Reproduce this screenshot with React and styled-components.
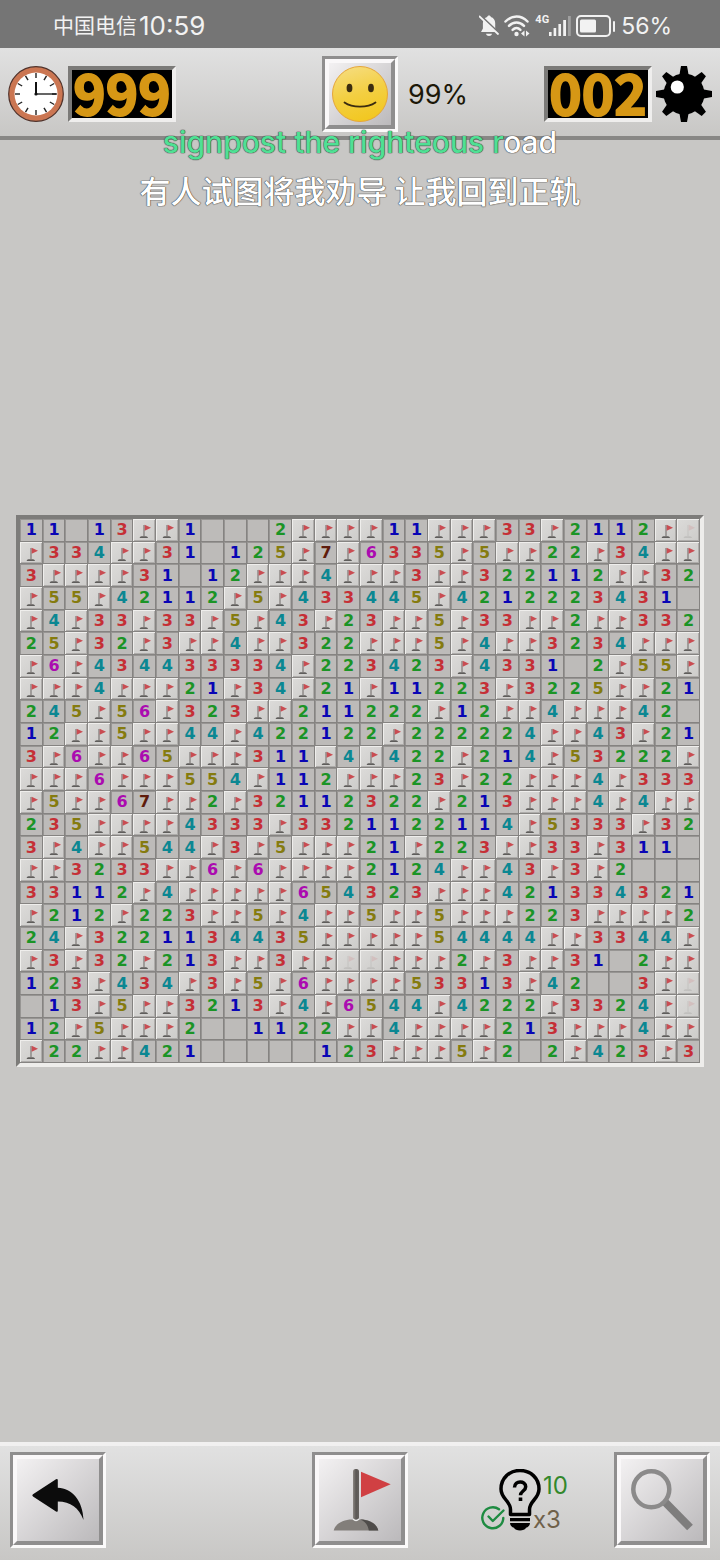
import React from "react";
import styled, { createGlobalStyle, css } from "styled-components";

const GlobalStyle = createGlobalStyle`
  *, *::before, *::after { box-sizing: border-box; }
  body {
    margin: 0;
    background: #c8c7c5;
    font-family: Inter, "Noto Sans CJK SC", sans-serif;
  }
  button { font: inherit; color: inherit; cursor: pointer; }
  svg { display: block; }
`;

const ROWS = [
  "11.13FF1...2FFFF11FFF33F2112Ff",
  "F334FF31.125F7F6335F5FF22F34FF",
  "3FFFF31.12FFF4FFF3FF322112FF32",
  "F55F42112F5F433445F4212223431.",
  "F4F33F33F5F43F23FF5F33FF2FF332",
  "25F32F3FF4FF322FFF5F4FF3234FFF",
  "F6F434433334F223423F4331.2F55F",
  "FFF4FFF21F34F21F11223F3225FF21",
  "245F56F323FF211222F12FF4FFF42.",
  "12FF5FF44F422122F222224FF43F21",
  "3F6FF65FFF311F4F422F214F53222F",
  "FFF6FFF554F112FFF23F22FFF4F333",
  "F5FF67FF2F32112322F213FFF4F4FF",
  "235FFFF4333F3321122114F5333F32",
  "3F4FF544F3F5FFF21F223FF33F311.",
  "FF3233FF6F6FFFF2124FF43F3F2...",
  "33112F4FFFFF654323FFF421334321",
  "F212F223FF5F4FF5FF5FFF223FFFF2",
  "24F3221134435FFFFF54444FF3344F",
  "F3F32F213FF3FFffFFF2F3FF31.2FF",
  "123F434F3F5F6FFFF53313F42..3Ff",
  ".13F5FF3213F4F6544F4222F3324Ff",
  "12F5FFF2..1122FF4FFFF213FFF4FF",
  "F22FF421.....123FFF5F2.2F423F3",
];

const DIGIT_COLORS = {
  1: "#0905b5",
  2: "#1b9426",
  3: "#c52f36",
  4: "#0b8792",
  5: "#857b0f",
  6: "#ab0bb0",
  7: "#5f1c0c",
};

const Page = styled.div`
  position: relative;
  min-height: 100vh;
  display: flex;
  flex-direction: column;
`;

const StatusBar = styled.header`
  height: 48px;
  padding: 4px 48px 0 53px;
  display: flex;
  align-items: center;
  justify-content: space-between;
  background: #757575;
  color: #f2f2f2;
`;

const Carrier = styled.div`
  display: flex;
  align-items: center;
  font-size: 21px;
  line-height: 32px;
`;

const Time = styled.time`
  margin-left: 2px;
  font-size: 26px;
`;

const StatusIcons = styled.div`
  display: flex;
  align-items: center;
  gap: 5px;
`;

const Signal = styled.div`
  display: flex;
  align-items: flex-start;
`;

const Network = styled.span`
  font: 700 11px/10px "Roboto", sans-serif;
`;

const BatteryLevel = styled.span`
  font-size: 23px;
  line-height: 32px;
`;

const TopBar = styled.section`
  padding: 8px 8px 4px;
  display: grid;
  grid-template-columns: 1fr auto 1fr;
  align-items: center;
  background: linear-gradient(#e1e1e1, #c8c7c5);
  border-bottom: 4px solid #888785;
`;

const Gauge = styled.div`
  display: flex;
  align-items: center;
  gap: 4px;
`;

const RightSide = styled.div`
  display: flex;
  align-items: center;
  justify-content: space-between;
  padding-left: 10px;
`;

const Percent = styled.span`
  font-size: 27px;
  color: #1c1808;
`;

const Counter = styled.output`
  width: 108px;
  height: 56px;
  border: 4px solid;
  border-color: #7b7a78 #efeeed #efeeed #7b7a78;
  background: #000;
  color: #d69715;
  font: 700 55px/42px "Noto Sans CJK SC", sans-serif;
  -webkit-text-stroke: 2px #d69715;
  text-align: center;
`;

const BevelButton = styled.button`
  width: ${(p) => p.$size}px;
  height: ${(p) => p.$size}px;
  padding: 0;
  border: 3px solid;
  border-color: #8f8e8e #fbfafa #fbfafa #8f8e8e;
  background: none;
`;

const BevelFace = styled.span`
  display: flex;
  align-items: center;
  justify-content: center;
  width: 100%;
  height: 100%;
  border: 4px solid;
  border-color: #faf8f9 #8f8e8e #8f8e8e #faf8f9;
  background: linear-gradient(135deg, #f3f1f2, #bbb9bb);

  svg { flex: none; }
`;

const Lyrics = styled.div`
  position: absolute;
  top: 120px;
  left: 0;
  right: 0;
  text-align: center;
  color: #fff;
  pointer-events: none;
  text-shadow: 0 0 1px #444, 0 0 1px #444, 0 0 1px #444;
`;

const LyricLine = styled.p`
  margin: 0;
  font-size: 30px;
  font-weight: 500;
  line-height: 44px;
`;

const Translation = styled(LyricLine)`
  font-family: "Noto Sans CJK SC", sans-serif;
  font-size: 31px;
  line-height: 52px;
`;

const Sung = styled.span`
  color: #4fe094;
`;

const Field = styled.main`
  flex: 1;
  display: flex;
  align-items: center;
  padding: 0 16px;
`;

const Board = styled.div`
  width: 100%;
  display: grid;
  grid-template-columns: repeat(30, 1fr);
  border: 4px solid;
  border-color: #7d7c7a #eeedeb #eeedeb #7d7c7a;
`;

const Cell = styled.button`
  display: flex;
  align-items: center;
  justify-content: center;
  min-width: 0;
  aspect-ratio: 1;
  padding: 0;
  border: 0;
  font: 700 16px/20px "DejaVu Sans", Verdana, sans-serif;
  color: ${(p) => p.$color || "inherit"};
  ${(p) =>
    p.$covered
      ? css`
          background: linear-gradient(135deg, #dcdbd9, #cccbc9);
          box-shadow: inset -1px -1px #868482, inset 1px 1px #efeeec, inset -2px -2px #aeacaa;
        `
      : css`
          background: #bdbbb9;
          box-shadow: inset -1px -1px #858381, inset 1px 1px #979593;
        `}

  svg { width: 100%; height: 100%; opacity: ${(p) => (p.$faint ? 0.12 : 0.85)}; }
`;

const BottomBar = styled.footer`
  display: grid;
  grid-template-columns: 1fr auto 1fr;
  align-items: center;
  padding: 6px 10px 12px;
  border-top: 4px solid #f1f0f0;
  background: linear-gradient(#e1e1e1, #c8c7c5);
`;

const Tools = styled.div`
  display: flex;
  align-items: center;
  justify-content: flex-end;
  gap: 44px;
`;

const HintButton = styled.button`
  display: flex;
  align-items: center;
  padding: 0;
  border: 0;
  background: none;
`;

const HintCounts = styled.span`
  display: flex;
  flex-direction: column;
  align-items: flex-start;
  width: 27px;
  padding-top: 6px;
  font-size: 24px;
  font-weight: 400;
  line-height: 34px;
`;

const HintsLeft = styled.span`
  color: #33882c;
`;

const HintCost = styled.span`
  margin-left: -10px;
  color: #6f614a;
`;

function BellOff() {
  return (
    <svg width="20" height="22" viewBox="0 0 20 22" aria-hidden="true">
      <path d="M10 0.500c1 0 1.700.6 1.800 1.400 2.700.8 4.400 3 4.400 6v5.500l2 3.600H2l1.900-3.600V8c0-3 1.700-5.300 4.300-6.100C8.400 1.100 9 .5 10 .5z" fill="#f2f2f2" />
      <path d="M7 18.800h6c-.3 1.400-1.500 2.200-3 2.200s-2.700-.8-3-2.200z" fill="#f2f2f2" />
      <path d="M1.500 0.500 20.500 18.500" stroke="#757575" strokeWidth="2" />
      <path d="M0.500 1.500 19 19" stroke="#f2f2f2" strokeWidth="1.800" strokeLinecap="round" />
    </svg>
  );
}

function Wifi() {
  return (
    <svg width="26" height="22" viewBox="0 0 26 22" aria-hidden="true">
      <g fill="none" stroke="#f2f2f2" strokeWidth="2.500" strokeLinecap="round">
        <path d="M1.500 6.500C8-.2 17-.2 23.500 6.500" />
        <path d="M5 10.800c4.400-4.500 10.600-4.500 15 0" />
        <path d="M8.600 14.800c2.400-2.400 5.400-2.400 7.800 0" />
      </g>
      <circle cx="12.500" cy="19" r="2.200" fill="#f2f2f2" />
      <path d="M20.500 15.500v6l-3.500-3zM22 15.500v6l3.500-3z" fill="#f2f2f2" />
    </svg>
  );
}

function Bars() {
  return (
    <svg width="22" height="22" viewBox="0 0 22 22" fill="#f2f2f2" aria-hidden="true">
      <rect x="0" y="17" width="2.600" height="4" />
      <rect x="4.600" y="13" width="2.600" height="8" />
      <rect x="9.400" y="9" width="2.600" height="12" />
      <rect x="14.200" y="5" width="2.800" height="16" />
      <rect x="19" y="1" width="2.800" height="20" opacity=".35" />
    </svg>
  );
}

function Battery() {
  return (
    <svg width="40" height="22" viewBox="0 0 40 22" aria-hidden="true">
      <rect x="1" y="1" width="33" height="20" rx="4" fill="none" stroke="#f2f2f2" strokeWidth="2" />
      <rect x="4" y="4.500" width="16" height="13" rx="1.500" fill="#f2f2f2" />
      <rect x="37" y="6" width="2" height="11" rx="1" fill="#f2f2f2" />
    </svg>
  );
}

function Clock() {
  const ticks = Array.from({ length: 12 }, (_, i) => i * 30);
  return (
    <svg width="56" height="56" viewBox="0 0 56 56" aria-hidden="true">
      <circle cx="28" cy="28" r="27.300" fill="#cb7652" stroke="#50322a" strokeWidth="1.200" />
      <circle cx="28" cy="28" r="21.500" fill="#fff" />
      {ticks.map((a) => (
        <path key={a} d="M28 7v5" stroke="#222" strokeWidth="1.400" transform={`rotate(${a} 28 28)`} />
      ))}
      <path d="M28 28V16" stroke="#111" strokeWidth="2" />
      <path d="M28 28h20" stroke="#111" strokeWidth="1.300" />
      <circle cx="28" cy="28" r="1.600" fill="#111" />
    </svg>
  );
}

function Mine() {
  return (
    <svg width="56" height="56" viewBox="0 0 56 56" aria-hidden="true">
      <circle cx="28" cy="28" r="20.500" />
      {[0, 45, 90, 135, 180, 225, 270, 315].map((a) => (
        <path key={a} d="M25 0h6L33 11H23z" transform={`rotate(${a} 28 28)`} />
      ))}
      <circle cx="21.300" cy="21" r="6.600" fill="#fff" />
    </svg>
  );
}

function Smiley() {
  return (
    <svg width="56" height="56" viewBox="0 0 56 56" aria-hidden="true">
      <defs>
        <linearGradient id="face" x1="0.300" y1="0" x2="0.600" y2="1">
          <stop offset="0" stopColor="#f6dc7c" />
          <stop offset=".5" stopColor="#f3cf42" />
          <stop offset="1" stopColor="#f2c71f" />
        </linearGradient>
      </defs>
      <circle cx="28" cy="28" r="27.500" fill="url(#face)" stroke="#e5a53a" strokeWidth="1" />
      <ellipse cx="17.500" cy="22" rx="2.900" ry="4.300" fill="#3b2c10" />
      <ellipse cx="39" cy="22" rx="2.900" ry="4.300" fill="#3b2c10" />
      <path d="M12.500 36.500c8 5.600 23 5.600 31 0" fill="none" stroke="#3b2c10" strokeWidth="1.800" strokeLinecap="round" />
    </svg>
  );
}

function CellFlag() {
  return (
    <svg viewBox="0 0 68 68" aria-hidden="true">
      <path d="M20 57c1-4 4-5 9-5h6c5 0 9 1 10 5z" fill="#4c4a48" />
      <path d="M33 18v35" stroke="#6b6664" strokeWidth="3.500" />
      <path d="M35 17l19 9-19 9z" fill="#c8353c" />
    </svg>
  );
}

function BackArrow() {
  return (
    <svg width="84" height="84" viewBox="0 0 84 84" aria-hidden="true">
      <path
        d="M17 36.200 40 21.200q1.800-.8 1.800 1v7.600C56 30 67 43 67.500 62c-4.500-12-13-18.500-25.700-18.500v9q0 1.900-1.800.9L17 38.400q-1.500-1.100 0-2.200z"
        fill="#0c0c0c"
      />
    </svg>
  );
}

function BigFlag() {
  return (
    <svg width="84" height="84" viewBox="0 0 84 84" aria-hidden="true">
      <defs>
        <linearGradient id="pole" x1="0" x2="1" y1="0" y2="0">
          <stop offset="0" stopColor="#8b8682" />
          <stop offset=".5" stopColor="#5c5855" />
          <stop offset="1" stopColor="#65615e" />
        </linearGradient>
      </defs>
      <path d="M15.700 72.500C17 66 25 61.500 34 61.500h9c9 0 16 4.500 17.300 11z" fill="#827e7a" />
      <path d="M42 61.500c9 0 17 4.500 18.300 11h-9.500C50 67 47 63 42 61.500z" fill="#4f4c4a" />
      <rect x="35" y="11" width="6" height="51" rx="2.500" fill="url(#pole)" />
      <path d="M35 61q3 3 6 0" fill="none" stroke="#eee" strokeWidth="1.200" />
      <path d="M43 13.700 72.700 26.300 43 39.300z" fill="#d04043" />
    </svg>
  );
}

function Magnifier() {
  return (
    <svg width="84" height="84" viewBox="0 0 84 84" aria-hidden="true">
      <path d="M44.500 43.500 70 69.500" stroke="#7e7d7d" strokeWidth="8" />
      <circle cx="31.300" cy="31.300" r="18" fill="none" stroke="#8b8a8a" strokeWidth="4.500" />
    </svg>
  );
}

function Bulb() {
  return (
    <svg width="62" height="62" viewBox="0 0 62 62" aria-hidden="true">
      <path
        d="M29.500 45.500v-5c0-4-2-6.500-4.500-9.500-3-3.500-5-6.500-5-11C20 9 28.500 1.500 39 1.500S58 9 58 20c0 4.500-2 7.500-5 11-2.500 3-4.500 5.500-4.500 9.500v5z"
        fill="none"
        stroke="#000"
        strokeWidth="3.500"
        strokeLinejoin="round"
      />
      <path d="M29 49h20v3.200H29zM29 54h20c0 2-1.500 4-4 4.800-1.300 3.600-10.700 3.600-12 0-2.500-.8-4-2.800-4-4.800z" />
      <path d="M33.500 18.500c0-7.200 11.200-7.200 11.200-.8 0 4.300-5.200 4.300-5.200 8.600" fill="none" stroke="#000" strokeWidth="3.500" />
      <rect x="37.700" y="28.500" width="3.600" height="3.500" />
      <path d="M18 40.300A10.500 10.500 0 1 0 22.300 49" fill="none" stroke="#1e8b41" strokeWidth="2.400" strokeLinecap="round" />
      <path d="M7.500 47.500 11.800 52 22.500 41.500" fill="none" stroke="#1e8b41" strokeWidth="2.400" strokeLinecap="round" strokeLinejoin="round" />
    </svg>
  );
}

function BoardCell({ value }) {
  const covered = value === "F" || value === "f";
  return (
    <Cell
      type="button"
      $covered={covered}
      $faint={value === "f"}
      $color={DIGIT_COLORS[value]}
      aria-label={covered ? "flag" : value === "." ? "empty" : value}
    >
      {covered ? <CellFlag /> : value === "." ? null : value}
    </Cell>
  );
}

function Bevel({ size, label, children }) {
  return (
    <BevelButton type="button" $size={size} aria-label={label}>
      <BevelFace>{children}</BevelFace>
    </BevelButton>
  );
}

export default function App() {
  return (
    <Page>
      <GlobalStyle />
      <StatusBar>
        <Carrier>
          中国电信<Time>10:59</Time>
        </Carrier>
        <StatusIcons>
          <BellOff />
          <Wifi />
          <Signal>
            <Network>4G</Network>
            <Bars />
          </Signal>
          <Battery />
          <BatteryLevel>56%</BatteryLevel>
        </StatusIcons>
      </StatusBar>

      <TopBar>
        <Gauge>
          <Clock />
          <Counter>999</Counter>
        </Gauge>
        <Bevel size={76} label="New game">
          <Smiley />
        </Bevel>
        <RightSide>
          <Percent>99%</Percent>
          <Gauge>
            <Counter>002</Counter>
            <Mine />
          </Gauge>
        </RightSide>
      </TopBar>

      <Lyrics>
        <LyricLine>
          <Sung>signpost the righteous r</Sung>oad
        </LyricLine>
        <Translation>有人试图将我劝导 让我回到正轨</Translation>
      </Lyrics>

      <Field>
        <Board>
          {ROWS.flatMap((row, y) =>
            [...row].map((value, x) => <BoardCell key={`${y}-${x}`} value={value} />)
          )}
        </Board>
      </Field>

      <BottomBar>
        <Bevel size={96} label="Back">
          <BackArrow />
        </Bevel>
        <Bevel size={96} label="Flag mode">
          <BigFlag />
        </Bevel>
        <Tools>
          <HintButton type="button" aria-label="Hint">
            <Bulb />
            <HintCounts>
              <HintsLeft>10</HintsLeft>
              <HintCost>x3</HintCost>
            </HintCounts>
          </HintButton>
          <Bevel size={96} label="Zoom">
            <Magnifier />
          </Bevel>
        </Tools>
      </BottomBar>
    </Page>
  );
}
